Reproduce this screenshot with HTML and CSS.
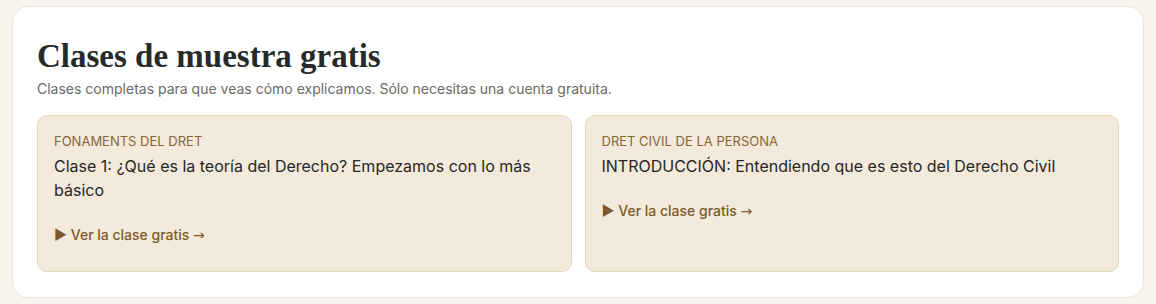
FILE: index.html
```html
<!DOCTYPE html>
<html lang="es">
<head>
    <meta charset="UTF-8">
    <meta name="viewport" content="width=device-width, initial-scale=1.0">
    <title>Clases de muestra gratis</title>
    <link rel="stylesheet" href="styles.css">
</head>
<body>
    <section class="panel">
        <h2>Clases de muestra gratis</h2>
        <p class="lead">Clases completas para que veas cómo explicamos. Sólo necesitas una cuenta gratuita.</p>

        <div class="cards">
            <a href="#" class="card">
                <span class="card-tag">Fonaments del Dret</span>
                <span class="card-title">Clase 1: ¿Qué es la teoría del Derecho? Empezamos con lo más básico</span>
                <span class="card-link">&#9654; Ver la clase gratis <span class="arrow">&rarr;</span></span>
            </a>
            <a href="#" class="card">
                <span class="card-tag">Dret Civil de la Persona</span>
                <span class="card-title">INTRODUCCIÓN: Entendiendo que es esto del Derecho Civil</span>
                <span class="card-link">&#9654; Ver la clase gratis <span class="arrow">&rarr;</span></span>
            </a>
        </div>
    </section>
</body>
</html>
```

FILE: styles.css
```css
/* Global */
body {
    margin: 0;
    padding: 6px 12px;
    background-color: #f8f5ef;
    font-family: 'Inter', 'Noto Sans', sans-serif;
    color: #2b2b2b;
}

/* Panel */
.panel {
    background-color: white;
    border: 1px solid #ebe5d9;
    border-radius: 16px;
    padding: 31px 24px 25px 24px;
}

h2 {
    font-family: 'Liberation Serif', 'DejaVu Serif', serif;
    font-size: 33px;
    font-weight: bold;
    color: #262b2a;
    margin: 0 0 5px 0;
    line-height: 36px;
}

.lead {
    font-size: 14px;
    color: #6a6a66;
    margin: 0 0 16px 0;
    line-height: 20px;
}

/* Cards */
.cards {
    display: grid;
    grid-template-columns: 1fr 1fr;
    gap: 13px;
}

.card {
    display: flex;
    flex-direction: column;
    background-color: #f4eadb;
    border: 1px solid #e6d9b9;
    border-radius: 10px;
    padding: 16px 16px 26px 16px;
    text-decoration: none;
    min-height: 110px;
}

.card-tag {
    font-size: 13px;
    text-transform: uppercase;
    color: #85653a;
    line-height: 18px;
    margin-bottom: 4px;
}

.card-title {
    font-size: 16px;
    color: #262626;
    line-height: 24px;
    margin-bottom: 23px;
}

.card-link {
    font-size: 14px;
    font-weight: 500;
    color: #7a5a2b;
    line-height: 20px;
}

.card-link .arrow {
    font-family: 'DejaVu Sans', sans-serif;
    font-weight: normal;
}
```
